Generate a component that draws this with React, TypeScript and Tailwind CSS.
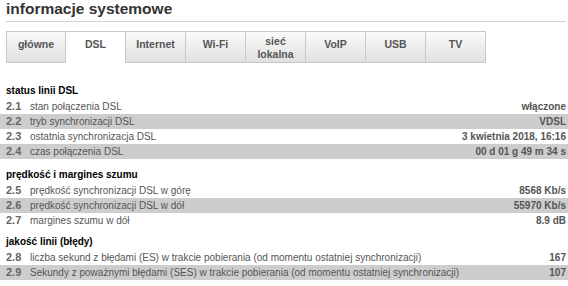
import React from 'react';

type Row = { no: string; label: string; value: string };

const sections: { title: string; rows: Row[] }[] = [
  {
    title: 'status linii DSL',
    rows: [
      { no: '2.1', label: 'stan połączenia DSL', value: 'włączone' },
      { no: '2.2', label: 'tryb synchronizacji DSL', value: 'VDSL' },
      { no: '2.3', label: 'ostatnia synchronizacja DSL', value: '3 kwietnia 2018, 16:16' },
      { no: '2.4', label: 'czas połączenia DSL', value: '00 d 01 g 49 m 34 s' },
    ],
  },
  {
    title: 'prędkość i margines szumu',
    rows: [
      { no: '2.5', label: 'prędkość synchronizacji DSL w górę', value: '8568 Kb/s' },
      { no: '2.6', label: 'prędkość synchronizacji DSL w dół', value: '55970 Kb/s' },
      { no: '2.7', label: 'margines szumu w dół', value: '8.9 dB' },
    ],
  },
  {
    title: 'jakość linii (błędy)',
    rows: [
      { no: '2.8', label: 'liczba sekund z błędami (ES) w trakcie pobierania (od momentu ostatniej synchronizacji)', value: '167' },
      { no: '2.9', label: 'Sekundy z poważnymi błędami (SES) w trakcie pobierania (od momentu ostatniej synchronizacji)', value: '107' },
    ],
  },
];

const tabs = ['główne', 'DSL', 'Internet', 'Wi-Fi', 'sieć lokalna', 'VoIP', 'USB', 'TV'];

const App: React.FC = () => {
  return (
    <div className="w-[568px] h-[286px] overflow-hidden bg-white font-['Liberation_Sans',Arial,sans-serif]">
      {/* Title */}
      <div className="pl-[6px]">
        <h1 className="text-[15.5px] leading-[17px] font-bold text-[#333]">informacje systemowe</h1>
        <div className="mt-[4px] h-px bg-[#d4d4d4] w-[560px]" />
      </div>

      {/* Tabs */}
      <div className="flex pl-[6px] mt-[9px]">
        {tabs.map((t, i) => {
          const active = t === 'DSL';
          const twoLine = t === 'sieć lokalna';
          return (
            <div
              key={t}
              className={
                'w-[60px] h-[32px] flex justify-center text-center text-[10.5px] font-bold text-[#555] border-t border-[#c8c8c8] ' +
                (twoLine ? 'pt-[3px] leading-[13px] ' : 'pt-[6px] leading-[12px] ') +
                (i === 0 ? 'border-l ' : '') +
                'border-r ' +
                (active ? 'bg-white' : 'border-b bg-gradient-to-b from-[#fbfbfb] to-[#e0e0e0]')
              }
            >
              {twoLine ? (
                <span>
                  sieć
                  <br />
                  lokalna
                </span>
              ) : (
                t
              )}
            </div>
          );
        })}
      </div>

      {/* Sections */}
      <div className="mt-[20px]">
        {sections.map((s, si) => (
          <div key={s.title} className={si === 0 ? '' : si === 1 ? 'mt-[8px]' : 'mt-[6px]'}>
            <div className="pl-[6px] h-[16px] leading-[16px] text-[10px] font-bold text-black">{s.title}</div>
            {s.rows.map((r, ri) => (
              <div
                key={r.no}
                className={
                  'flex items-center h-[15px] pl-[6px] pr-[2px] ' + (ri % 2 === 1 ? 'bg-[#cdcdcd]' : '')
                }
              >
                <span className="w-[24px] text-[11px] font-bold text-[#666]">{r.no}</span>
                <span className="flex-1 text-[10px] text-[#555] whitespace-nowrap">{r.label}</span>
                <span className="text-[10px] font-bold text-[#555] whitespace-nowrap">{r.value}</span>
              </div>
            ))}
          </div>
        ))}
      </div>
    </div>
  );
};

export default App;
